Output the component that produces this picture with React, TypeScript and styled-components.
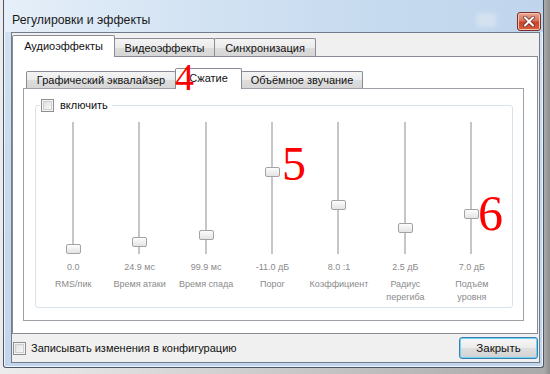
import styled, { createGlobalStyle } from "styled-components";

const GlobalStyle = createGlobalStyle`
    html, body {
        margin: 0;
        padding: 0;
        background: #d6d6d6;
    }
    body {
        font-family: "Liberation Sans", Arial, sans-serif;
    }
`;

type SliderInfo = {
    value: string;
    name: string[];
    pos: number; // центр ползунка от верха дорожки, px
};

const SLIDERS: SliderInfo[] = [
    { value: '0.0', name: ['RMS/пик'], pos: 127 },
    { value: '24.9 мс', name: ['Время атаки'], pos: 120 },
    { value: '99.9 мс', name: ['Время спада'], pos: 113 },
    { value: '-11.0 дБ', name: ['Порог'], pos: 50 },
    { value: '8.0 :1', name: ['Коэффициент'], pos: 83 },
    { value: '2.5 дБ', name: ['Радиус', 'перегиба'], pos: 106 },
    { value: '7.0 дБ', name: ['Подъём', 'уровня'], pos: 92 },
];

const OUTER_TABS = [
    { label: 'Аудиоэффекты', width: 103, active: true },
    { label: 'Видеоэффекты', width: 101, active: false },
    { label: 'Синхронизация', width: 102, active: false },
];

const INNER_TABS = [
    { label: 'Графический эквалайзер', width: 150, active: false },
    { label: 'Сжатие', width: 67, active: true },
    { label: 'Объёмное звучание', width: 122, active: false },
];

const App = () => {
    return (
        <Desktop>
            <GlobalStyle />
            <DialogWindow>
                <TitleBar>
                    <Title>Регулировки и эффекты</Title>
                    <FadedButton />
                    <CloseButton>
                        <svg width="12" height="11" viewBox="0 0 12 11">
                            <path d="M2 1.5 L10 9.5 M10 1.5 L2 9.5" stroke="#5a1a10" strokeWidth="3.4" strokeLinecap="round" />
                            <path d="M2 1.5 L10 9.5 M10 1.5 L2 9.5" stroke="#ffffff" strokeWidth="2.2" strokeLinecap="round" />
                        </svg>
                    </CloseButton>
                </TitleBar>
                <Client>
                    <TabStrip>
                        {OUTER_TABS.map((t, i) => (
                            <Tab key={i} $active={t.active} $width={t.width} $big>{t.label}</Tab>
                        ))}
                    </TabStrip>
                    <OuterPanel>
                        <InnerStrip>
                            {INNER_TABS.map((t, i) => (
                                <Tab key={i} $active={t.active} $width={t.width}>{t.label}</Tab>
                            ))}
                        </InnerStrip>
                        <InnerPanel>
                            <Group>
                                <Legend>
                                    <CheckBox />
                                    <LegendText>включить</LegendText>
                                </Legend>
                                <SliderGrid>
                                    {SLIDERS.map((s, i) => (
                                        <SliderCol key={i}>
                                            <Track>
                                                <Thumb $pos={s.pos} />
                                            </Track>
                                            <Value>{s.value}</Value>
                                            <Name>{s.name.map((str, j) => <span key={j}>{str}<br /></span>)}</Name>
                                        </SliderCol>
                                    ))}
                                </SliderGrid>
                            </Group>
                        </InnerPanel>
                    </OuterPanel>
                    <BottomRow>
                        <SaveOption>
                            <CheckBox />
                            <SaveText>Записывать изменения в конфигурацию</SaveText>
                        </SaveOption>
                        <Button>Закрыть</Button>
                    </BottomRow>
                </Client>
            </DialogWindow>
            <Mark $x={175} $y={58} $size={38}>4</Mark>
            <Mark $x={282} $y={140} $size={48}>5</Mark>
            <Mark $x={478} $y={188} $size={50}>6</Mark>
        </Desktop>
    );
}

export default App;


const Desktop = styled.div`
    position: relative;
    display: flex;
    width: 550px;
    height: 374px;
    padding: 0 6px 6px 3px;
    box-sizing: border-box;
    overflow: hidden;
    background: linear-gradient(to right, #ececec 0, #ececec 3px, #a9a9a9 544px, #8e8e8e 100%);
`;

const DialogWindow = styled.div`
    flex: 1;
    display: flex;
    flex-direction: column;
    min-width: 0;
    border: 1px solid #4a5668;
    border-top: none;
    border-radius: 0 0 3px 3px;
    padding: 0 3px 4px 7px;
    background: linear-gradient(to bottom, #d5e3f2 0%, #c9dbee 40%, #c3d5ea 100%);
    box-shadow: inset 1px 0 0 #eef4fb, inset -1px 0 0 #eef4fb, inset 0 -1px 0 #eef4fb;
`;

const TitleBar = styled.div`
    display: flex;
    align-items: flex-end;
    height: 32px;
    margin-left: -7px;
    margin-right: -3px;
    padding-left: 8px;
    box-sizing: border-box;
    background: linear-gradient(to right, #e6eff9 0%, #d3e3f3 35%, #c6daef 70%, #c0d5ec 100%);
`;

const Title = styled.div`
    flex: 1;
    font-size: 12.3px;
    line-height: 16px;
    color: #1a1a1a;
    margin-bottom: 4px;
`;

const FadedButton = styled.div`
    width: 20px;
    height: 14px;
    margin: 0 21px 5px 0;
    border-radius: 3px;
    background: #d9e5f1;
    filter: blur(2px);
    opacity: 0.8;
`;

const CloseButton = styled.div`
    display: flex;
    align-items: center;
    justify-content: center;
    width: 24px;
    height: 19px;
    margin: 0 2px 1px 0;
    box-sizing: border-box;
    border: 1px solid #7a2f22;
    border-radius: 3px;
    background: linear-gradient(to bottom, #eaa894 0%, #d8745a 45%, #c8432a 55%, #d9603f 100%);
    box-shadow: inset 0 0 0 1px #f3c3b4;
`;

const Client = styled.div`
    flex: 1;
    display: flex;
    flex-direction: column;
    min-height: 0;
    border: 1px solid #6e7c8e;
    background-color: #f0f0f0;
    padding: 2px 1px 0 0;
`;

const TabStrip = styled.div`
    display: flex;
    align-items: flex-end;
    height: 21px;
`;

const InnerStrip = styled.div`
    display: flex;
    align-items: flex-end;
    height: 20px;
    margin-left: 3px;
`;

const Tab = styled.div<{
    $active: boolean;
    $width: number;
    $big?: boolean;
}>`
    position: relative;
    display: flex;
    align-items: center;
    justify-content: center;
    width: ${props => props.$width}px;
    height: ${props => props.$active ? (props.$big ? 22 : 21) : (props.$big ? 18 : 17)}px;
    margin-bottom: ${props => props.$active ? -1 : 0}px;
    margin-left: -1px;
    &:first-child {
        margin-left: 0;
    }
    box-sizing: border-box;
    border: 1px solid #898c95;
    border-bottom: none;
    border-radius: 2px 2px 0 0;
    padding-bottom: ${props => props.$active ? 2 : 0}px;
    font-size: 11px;
    color: #111;
    white-space: nowrap;
    z-index: ${props => props.$active ? 2 : 1};
    background: ${props => props.$active
        ? '#ffffff'
        : 'linear-gradient(to bottom, #f4f4f4 0%, #ebebeb 50%, #dddddd 51%, #d6d6d6 100%)'};
`;

const OuterPanel = styled.div`
    flex: 1;
    display: flex;
    flex-direction: column;
    min-height: 0;
    border: 1px solid #898c95;
    background-color: #ffffff;
    padding: 11px 13px 12px 10px;
`;

const InnerPanel = styled.div`
    flex: 1;
    display: flex;
    flex-direction: column;
    min-height: 0;
    border: 1px solid #9da2a9;
    background-color: #ffffff;
    padding: 10px 10px 12px 11px;
`;

const Group = styled.fieldset`
    flex: 1;
    display: flex;
    flex-direction: column;
    min-width: 0;
    margin: 0;
    padding: 0 7px 0 4px;
    border: 1px solid #d9e2ea;
    border-radius: 3px;
`;

const Legend = styled.legend`
    display: flex;
    align-items: center;
    gap: 6px;
    padding: 0 4px 0 1px;
    height: 13px;
`;

const LegendText = styled.span`
    font-size: 11px;
    line-height: 13px;
    color: #111;
`;

const CheckBox = styled.div`
    width: 13px;
    height: 13px;
    box-sizing: border-box;
    border: 1px solid #8f8f8f;
    background: linear-gradient(135deg, #d8d8d8 0%, #f0f0f0 60%, #fbfbfb 100%);
    box-shadow: inset 0 0 0 1px #f4f4f4, inset 0 0 0 2px #cfcfcf;
`;

const SliderGrid = styled.div`
    display: grid;
    grid-template-columns: repeat(7, 1fr);
    padding-top: 10px;
`;

const SliderCol = styled.div`
    display: flex;
    flex-direction: column;
    align-items: center;
`;

const Track = styled.div`
    position: relative;
    width: 15px;
    height: 132px;
    &::before {
        content: '';
        position: absolute;
        left: 6px;
        top: 0;
        width: 2px;
        height: 100%;
        background-color: #c6c6c6;
    }
`;

const Thumb = styled.div<{
    $pos: number;
}>`
    position: absolute;
    left: 0;
    top: ${props => props.$pos - 5}px;
    width: 15px;
    height: 10px;
    box-sizing: border-box;
    border: 1px solid #a3a3a3;
    border-radius: 2px;
    background: linear-gradient(to bottom, #fdfdfd 0%, #f0f0f0 50%, #e4e4e4 100%);
`;

const Value = styled.div`
    margin-top: 8px;
    font-size: 9px;
    line-height: 11px;
    color: #8a8a8a;
    white-space: nowrap;
`;

const Name = styled.div`
    margin-top: 5px;
    font-size: 9px;
    line-height: 13px;
    color: #8a8a8a;
    text-align: center;
    white-space: nowrap;
`;

const BottomRow = styled.div`
    display: flex;
    align-items: center;
    justify-content: space-between;
    height: 28px;
    padding: 0 0 0 1px;
`;

const SaveOption = styled.div`
    display: flex;
    align-items: center;
    gap: 5px;
`;

const SaveText = styled.span`
    font-size: 11px;
    color: #111;
`;

const Button = styled.div`
    display: flex;
    align-items: center;
    justify-content: center;
    width: 79px;
    height: 22px;
    box-sizing: border-box;
    border: 1px solid #3c7fb1;
    border-radius: 3px;
    font-size: 11.5px;
    color: #111;
    background: linear-gradient(to bottom, #f6f6f6 0%, #ececec 48%, #dedede 52%, #d2d2d2 100%);
    box-shadow: inset 0 0 0 1px #6fd2f5;
`;

const Mark = styled.div<{
    $x: number;
    $y: number;
    $size: number;
}>`
    position: absolute;
    z-index: 10;
    left: ${props => props.$x}px;
    top: ${props => props.$y}px;
    font-family: "Liberation Serif", "Times New Roman", serif;
    font-size: ${props => props.$size}px;
    line-height: 1;
    color: #ff0000;
    pointer-events: none;
`;
